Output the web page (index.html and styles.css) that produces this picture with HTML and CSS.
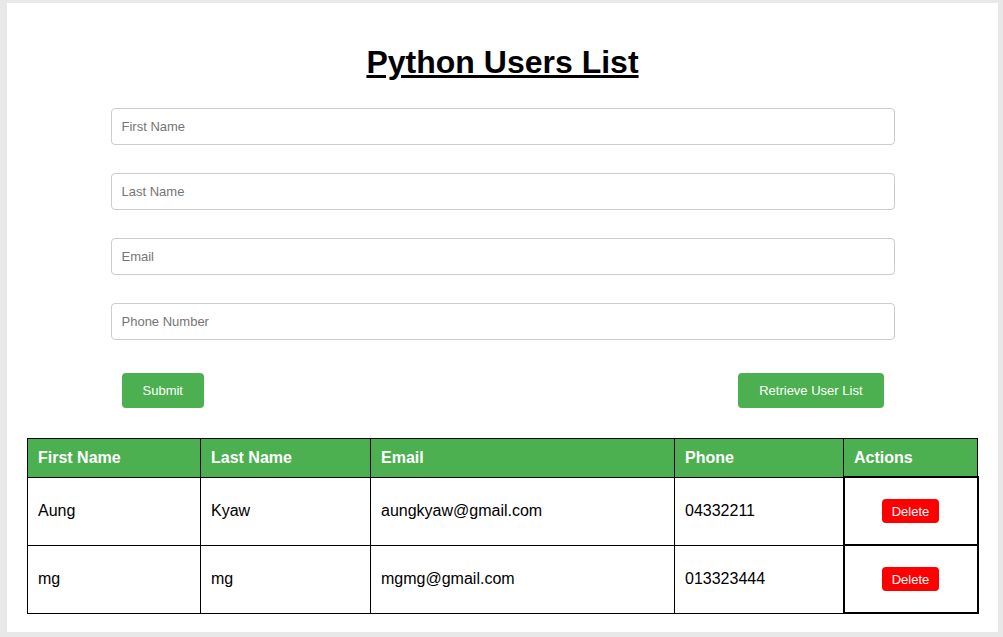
FILE: index.html
```html
<!DOCTYPE html>
<html>
<head>
<meta charset="utf-8">
<link rel="stylesheet" href="styles.css">
</head>
<body>
<div class="container">
  <h1 class="title">Python Users List</h1>
  <form class="form">
    <input class="field" type="text" placeholder="First Name">
    <input class="field" type="text" placeholder="Last Name">
    <input class="field" type="text" placeholder="Email">
    <input class="field" type="text" placeholder="Phone Number">
    <div class="btn-row">
      <button type="button" class="btn">Submit</button>
      <button type="button" class="btn">Retrieve User List</button>
    </div>
  </form>
  <table class="users">
    <thead>
      <tr>
        <th class="c1">First Name</th>
        <th class="c2">Last Name</th>
        <th class="c3">Email</th>
        <th class="c4">Phone</th>
        <th class="c5">Actions</th>
      </tr>
    </thead>
    <tbody>
      <tr>
        <td>Aung</td>
        <td>Kyaw</td>
        <td>aungkyaw@gmail.com</td>
        <td>04332211</td>
        <td class="actions"><button type="button" class="del">Delete</button></td>
      </tr>
      <tr>
        <td>mg</td>
        <td>mg</td>
        <td>mgmg@gmail.com</td>
        <td>013323444</td>
        <td class="actions"><button type="button" class="del">Delete</button></td>
      </tr>
    </tbody>
  </table>
</div>
</body>
</html>
```

FILE: styles.css
```css
html, body {
  margin: 0;
  padding: 0;
}
body {
  background: #e8e8e8;
  font-family: "Liberation Sans", Arial, sans-serif;
  padding: 3px 5px 5px 7px;
}
.container {
  background: #ffffff;
  padding: 20px;
  height: 589px;
}
.title {
  margin: 21px 0 0 0;
  font-size: 32px;
  line-height: 37px;
  text-align: center;
  text-decoration: underline;
  color: #000;
}
.form {
  width: 784px;
  margin: 27px auto 0 auto;
  display: flex;
  flex-direction: column;
  gap: 28px;
}
.field {
  box-sizing: border-box;
  width: 784px;
  height: 37px;
  margin: 0;
  border: 1px solid #cccccc;
  border-radius: 4px;
  padding: 0 10px;
  font-family: "Liberation Sans", Arial, sans-serif;
  font-size: 13px;
  color: #333;
}
.field::placeholder {
  color: #757575;
}
.btn-row {
  display: flex;
  justify-content: space-between;
  padding: 5px 11px 0 11px;
}
.btn {
  height: 35px;
  padding: 0 21px;
  border: none;
  border-radius: 4px;
  background: #4caf50;
  color: #fff;
  font-family: "Liberation Sans", Arial, sans-serif;
  font-size: 13px;
}
.users {
  margin-top: 30px;
  width: 951px;
  table-layout: fixed;
  border-collapse: collapse;
  font-size: 16px;
  color: #000;
}
.users th, .users td {
  border: 1px solid #000;
  text-align: left;
  padding: 0 10px;
}
.users th {
  background: #4caf50;
  color: #fff;
  font-weight: bold;
  height: 37px;
}
.users td {
  height: 66px;
}
.c1 { width: 152px; }
.c2 { width: 149px; }
.c3 { width: 283px; }
.c4 { width: 148px; }
.c5 { width: 113px; }
.users td.actions {
  border: 2px solid #000;
  text-align: center;
}
.del {
  height: 24px;
  padding: 0 10px;
  border: none;
  border-radius: 4px;
  background: #ff0000;
  color: #fff;
  font-family: "Liberation Sans", Arial, sans-serif;
  font-size: 13px;
}
```
